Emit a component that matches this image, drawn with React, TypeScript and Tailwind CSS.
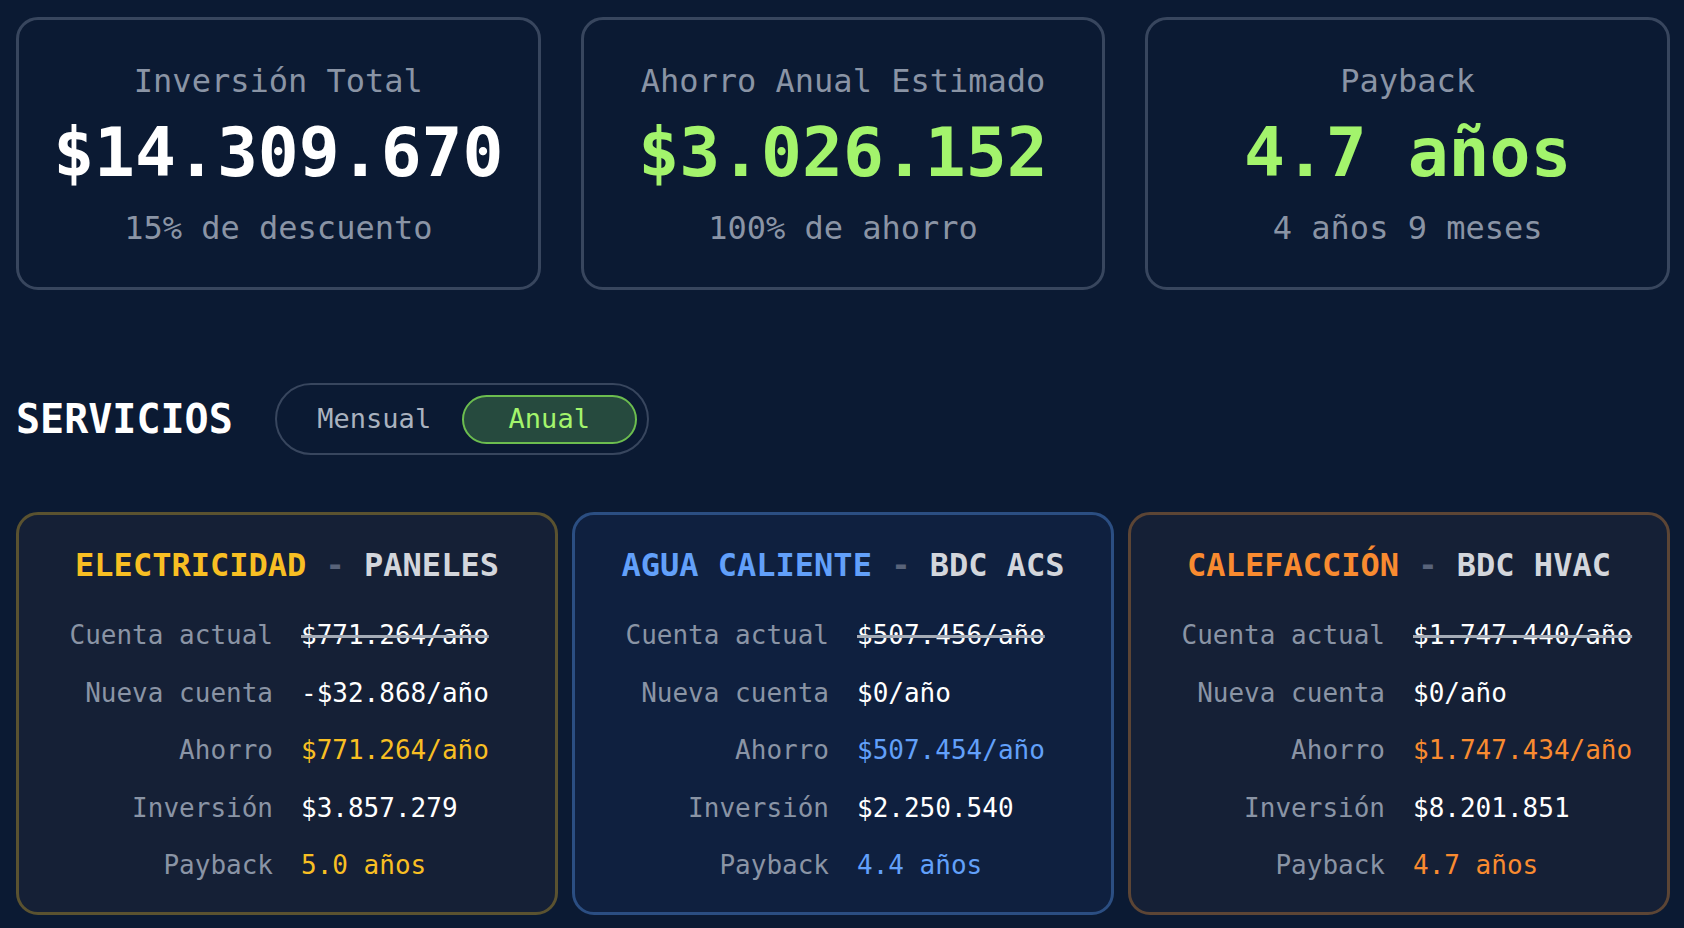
import { useState } from "react";

const font = { fontFamily: '"DejaVu Sans Mono", "Liberation Mono", monospace' };

const resumen = [
  { label: "Inversión Total", value: "$14.309.670", sub: "15% de descuento", color: "text-white" },
  { label: "Ahorro Anual Estimado", value: "$3.026.152", sub: "100% de ahorro", color: "text-[#a3f46c]" },
  { label: "Payback", value: "4.7 años", sub: "4 años 9 meses", color: "text-[#a3f46c]" },
];

const servicios = [
  {
    name: "ELECTRICIDAD",
    tech: "PANELES",
    accent: "text-[#f8bf23]",
    card: "border-[#5a5230] bg-[#152036]",
    actual: "$771.264/año",
    nueva: "-$32.868/año",
    ahorro: "$771.264/año",
    inversion: "$3.857.279",
    payback: "5.0 años",
  },
  {
    name: "AGUA CALIENTE",
    tech: "BDC ACS",
    accent: "text-[#62a0fa]",
    card: "border-[#2b4e82] bg-[#0f203f]",
    actual: "$507.456/año",
    nueva: "$0/año",
    ahorro: "$507.454/año",
    inversion: "$2.250.540",
    payback: "4.4 años",
  },
  {
    name: "CALEFACCIÓN",
    tech: "BDC HVAC",
    accent: "text-[#f98b30]",
    card: "border-[#5c4535] bg-[#152036]",
    actual: "$1.747.440/año",
    nueva: "$0/año",
    ahorro: "$1.747.434/año",
    inversion: "$8.201.851",
    payback: "4.7 años",
  },
];

const Label = ({ children }: { children: string }) => (
  <span className="text-right text-[#8a94a5]">{children}</span>
);

const App = () => {
  const [periodo, setPeriodo] = useState<"mensual" | "anual">("anual");

  return (
    <div style={font} className="min-h-[928px] bg-[#0b1a33] pl-[16px] pr-[14px] pt-[17px] pb-[13px]">
      <div className="grid grid-cols-3 gap-[40px]">
        {resumen.map((r) => (
          <div
            key={r.label}
            className="flex h-[273px] flex-col items-center rounded-[22px] border-[3px] border-[#38465e] pt-[37px]"
          >
            <p className="text-[32px] leading-[48px] text-[#8a94a5]">{r.label}</p>
            <p className={`mt-[14px] text-[68px] font-bold leading-[68px] ${r.color}`}>{r.value}</p>
            <p className="mt-[17px] text-[32px] leading-[48px] text-[#8a94a5]">{r.sub}</p>
          </div>
        ))}
      </div>

      <div className="mt-[93px] flex items-center gap-[42px]">
        <h2 className="text-[40px] font-semibold text-white">SERVICIOS</h2>
        <div className="flex h-[72px] items-center rounded-full border-2 border-[#38465e] px-[10px]">
          <button
            onClick={() => setPeriodo("mensual")}
            className={`h-[49px] w-[175px] rounded-full border-2 text-[27px] ${
              periodo === "mensual"
                ? "border-[#6cbd4f] bg-[#264a3e] text-[#a3f46c]"
                : "border-transparent text-[#aab2bf]"
            }`}
          >
            Mensual
          </button>
          <button
            onClick={() => setPeriodo("anual")}
            className={`h-[49px] w-[175px] rounded-full border-2 text-[27px] ${
              periodo === "anual"
                ? "border-[#6cbd4f] bg-[#264a3e] text-[#a3f46c]"
                : "border-transparent text-[#aab2bf]"
            }`}
          >
            Anual
          </button>
        </div>
      </div>

      <div className="mt-[57px] grid grid-cols-3 gap-[14px]">
        {servicios.map((s) => (
          <div key={s.name} className={`rounded-[22px] border-[3px] px-[20px] pt-[26px] pb-[27px] ${s.card}`}>
            <h3 className="text-center text-[32px] font-semibold leading-[48px]">
              <span className={s.accent}>{s.name}</span>
              <span className="text-[#58637a]"> - </span>
              <span className="text-[#d3d6dc]">{s.tech}</span>
            </h3>
            <div className="mt-[27px] grid grid-cols-2 gap-x-[28px] gap-y-[18.5px] text-[26px] leading-[39px]">
              <Label>Cuenta actual</Label>
              <span className="text-white line-through decoration-[#a4abb6] decoration-[3px]">{s.actual}</span>
              <Label>Nueva cuenta</Label>
              <span className="text-white">{s.nueva}</span>
              <Label>Ahorro</Label>
              <span className={s.accent}>{s.ahorro}</span>
              <Label>Inversión</Label>
              <span className="text-white">{s.inversion}</span>
              <Label>Payback</Label>
              <span className={s.accent}>{s.payback}</span>
            </div>
          </div>
        ))}
      </div>
    </div>
  );
};

export default App;
